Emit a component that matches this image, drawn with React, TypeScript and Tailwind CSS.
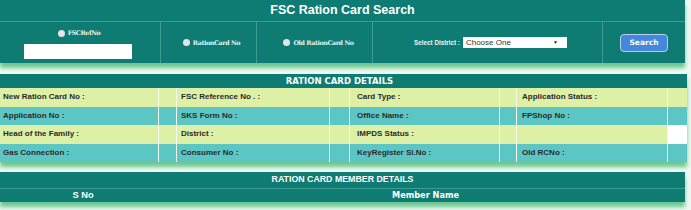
import React from "react";

const rows: { bg: string; cells: string[]; short?: boolean }[] = [
  {
    bg: "bg-[#def0a6]",
    cells: ["New Ration Card No :", "FSC Reference No . :", "Card Type :", "Application Status :"],
  },
  {
    bg: "bg-[#5cc6c5]",
    cells: ["Application No :", "SKS Form No :", "Office Name :", "FPShop No :"],
  },
  {
    bg: "bg-[#def0a6]",
    cells: ["Head of the Family :", "District :", "IMPDS Status :", ""],
    short: true,
  },
  {
    bg: "bg-[#5cc6c5]",
    cells: ["Gas Connection :", "Consumer No :", "KeyRegister Sl.No :", "Old RCNo :"],
  },
];

function Radio({ label }: { label: string }) {
  return (
    <label className="flex items-center gap-[3px] text-[6.3px] font-bold text-[#e8f4f0]">
      <span className="w-[7px] h-[7px] rounded-full bg-[#e4e4e4] inline-block" />
      <span className="font-['DejaVu_Serif',serif] tracking-[-0.4px]">{label}</span>
    </label>
  );
}

export default function App() {
  return (
    <div className="w-[691px] h-[210px] bg-[#eef9f1] font-['Liberation_Sans',Arial,sans-serif] overflow-hidden">
      {/* search panel */}
      <div className="w-[685px] bg-[#0e7c72] shadow-[0_5px_4px_#6cc792]">
        <div className="h-[22px] flex items-center justify-center border-b border-[#3f9c93]">
          <h1 className="text-white font-bold text-[12.5px]">FSC Ration Card Search</h1>
        </div>
        <div className="h-[41px] flex text-white">
          <div className="w-[161px] border-r border-[#3f9c93] flex flex-col items-center justify-center gap-[6px] pt-[2px]">
            <div className="ml-[-2px]">
              <Radio label="FSCRefNo" />
            </div>
            <div className="w-[108px] h-[15px] bg-white ml-[-5px]" />
          </div>
          <div className="w-[96px] border-r border-[#3f9c93] flex items-center justify-center pl-[6px]">
            <Radio label="RationCard No" />
          </div>
          <div className="w-[116px] border-r border-[#3f9c93] flex items-center justify-center pl-[8px]">
            <Radio label="Old RationCard No" />
          </div>
          <div className="w-[230px] border-r border-[#3f9c93] flex items-center justify-center gap-[3px] pl-[6px]">
            <span className="text-[6.3px] font-bold text-[#eef6f3]">Select District :</span>
            <div className="w-[104px] h-[11px] bg-white flex items-center justify-between px-[3px] text-[8px] text-[#333]">
              <span>Choose One</span>
              <span className="text-[5px] text-[#222] mr-[6px]">▼</span>
            </div>
          </div>
          <div className="flex-1 flex items-center justify-center">
            <button className="w-[48px] h-[18px] rounded-[4px] bg-[#4687dc] border border-[#b4d0f0] text-white text-[7.5px] font-bold font-['DejaVu_Sans',sans-serif]">
              Search
            </button>
          </div>
        </div>
      </div>

      {/* details */}
      <div className="mt-[11px] w-[687px] bg-white shadow-[0_5px_4px_#6cc792]">
        <div className="h-[14px] bg-[#0e7c72] flex items-center justify-center pr-[8px] text-white text-[8.5px] font-bold font-['DejaVu_Sans',sans-serif]">
          RATION CARD DETAILS
        </div>
        {rows.map((r, i) => (
          <div key={i} className="flex h-[18.5px] text-[8px] font-bold text-[#2a2a2a]">
            <div className={`w-[159px] ${r.bg} border-r border-[#f4f9ea] flex items-center pl-[3px]`}>{r.cells[0]}</div>
            <div className={`w-[18px] ${r.bg} border-r border-[#f4f9ea]`} />
            <div className={`w-[153px] ${r.bg} border-r border-[#f4f9ea] flex items-center pl-[4px]`}>{r.cells[1]}</div>
            <div className={`w-[20px] ${r.bg} border-r border-[#f4f9ea]`} />
            <div className={`w-[150px] ${r.bg} border-r border-[#f4f9ea] flex items-center pl-[7px]`}>{r.cells[2]}</div>
            <div className={`w-[17px] ${r.bg} border-r border-[#f4f9ea]`} />
            <div className={`w-[151px] ${r.bg} border-r border-[#f4f9ea] flex items-center pl-[5px]`}>{r.cells[3]}</div>
            <div className={`w-[19px] ${r.short ? "bg-white" : r.bg}`} />
          </div>
        ))}
      </div>

      {/* member details */}
      <div className="mt-[10px] w-[685px] bg-[#0e7c72] shadow-[0_5px_4px_#6cc792] text-white font-bold">
        <div className="h-[17px] flex items-center justify-center text-[8.8px] border-b border-[#3f9c93]">
          RATION CARD MEMBER DETAILS
        </div>
        <div className="h-[13px] flex items-center">
          <div className="w-[166px] text-center text-[9.3px]">S No</div>
          <div className="flex-1 text-center text-[8.2px] font-['DejaVu_Sans',sans-serif]">Member Name</div>
        </div>
      </div>
    </div>
  );
}
